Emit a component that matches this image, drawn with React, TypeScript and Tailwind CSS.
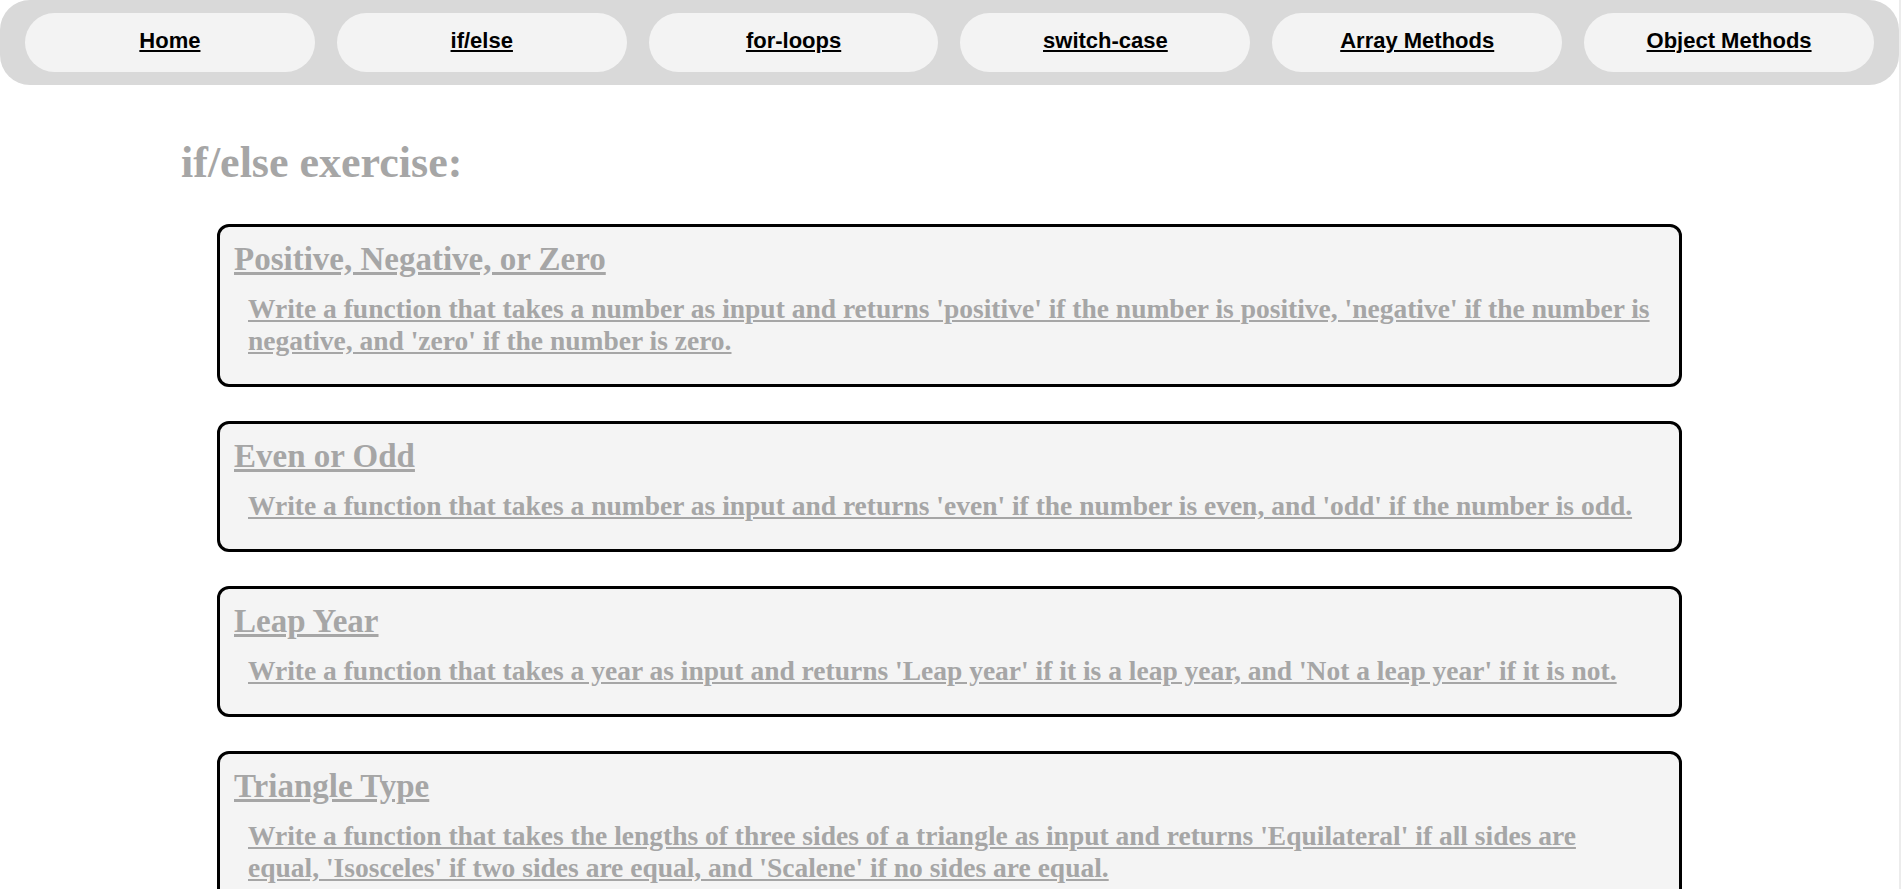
import React from "react";

const navItems = ["Home", "if/else", "for-loops", "switch-case", "Array Methods", "Object Methods"];

type Ex = { title: string; lines: string[] };

const exercises: Ex[] = [
  {
    title: "Positive, Negative, or Zero",
    lines: [
      "Write a function that takes a number as input and returns 'positive' if the number is positive, 'negative' if the number is",
      "negative, and 'zero' if the number is zero.",
    ],
  },
  {
    title: "Even or Odd",
    lines: [
      "Write a function that takes a number as input and returns 'even' if the number is even, and 'odd' if the number is odd.",
    ],
  },
  {
    title: "Leap Year",
    lines: [
      "Write a function that takes a year as input and returns 'Leap year' if it is a leap year, and 'Not a leap year' if it is not.",
    ],
  },
  {
    title: "Triangle Type",
    lines: [
      "Write a function that takes the lengths of three sides of a triangle as input and returns 'Equilateral' if all sides are",
      "equal, 'Isosceles' if two sides are equal, and 'Scalene' if no sides are equal.",
    ],
  },
];

export default function App() {
  return (
    <div className="flex min-h-screen bg-white">
      <div className="flex-1 min-w-0">
        <nav className="h-[85px] bg-[#d9d9d9] rounded-[30px] flex items-center gap-[22px] px-[25px]">
          {navItems.map((n) => (
            <a
              key={n}
              href="#"
              className="flex-1 h-[59px] rounded-[30px] bg-[#f3f3f3] flex items-center justify-center pb-[4px] font-['Liberation_Sans',Arial,sans-serif] font-bold text-[22px] text-black underline"
            >
              {n}
            </a>
          ))}
        </nav>

        <h1 className="mt-[52px] ml-[181px] font-['Liberation_Serif','Times_New_Roman',serif] font-bold text-[44px] leading-[normal] text-[#a6a6a6]">
          if/else exercise:
        </h1>

        <div className="mt-[36px] mx-[217px] flex flex-col gap-[34px] pb-[40px]">
          {exercises.map((ex) => (
            <div
              key={ex.title}
              className="border-[3px] border-black rounded-[12px] bg-[#f4f4f4] px-[14px] pt-[14px] pb-[27px] font-['Liberation_Serif','Times_New_Roman',serif] font-bold text-[#a6a6a6]"
            >
              <h2 className="text-[33px] leading-[normal] underline">{ex.title}</h2>
              <p className="mt-[15px] mx-[14px] text-[27.5px] leading-[normal] underline">
                {ex.lines.map((l, i) => (
                  <React.Fragment key={i}>
                    {i > 0 && <br />}
                    {l}
                  </React.Fragment>
                ))}
              </p>
            </div>
          ))}
        </div>
      </div>
      <div className="w-[2px] shrink-0 bg-[#ececec]" />
    </div>
  );
}
